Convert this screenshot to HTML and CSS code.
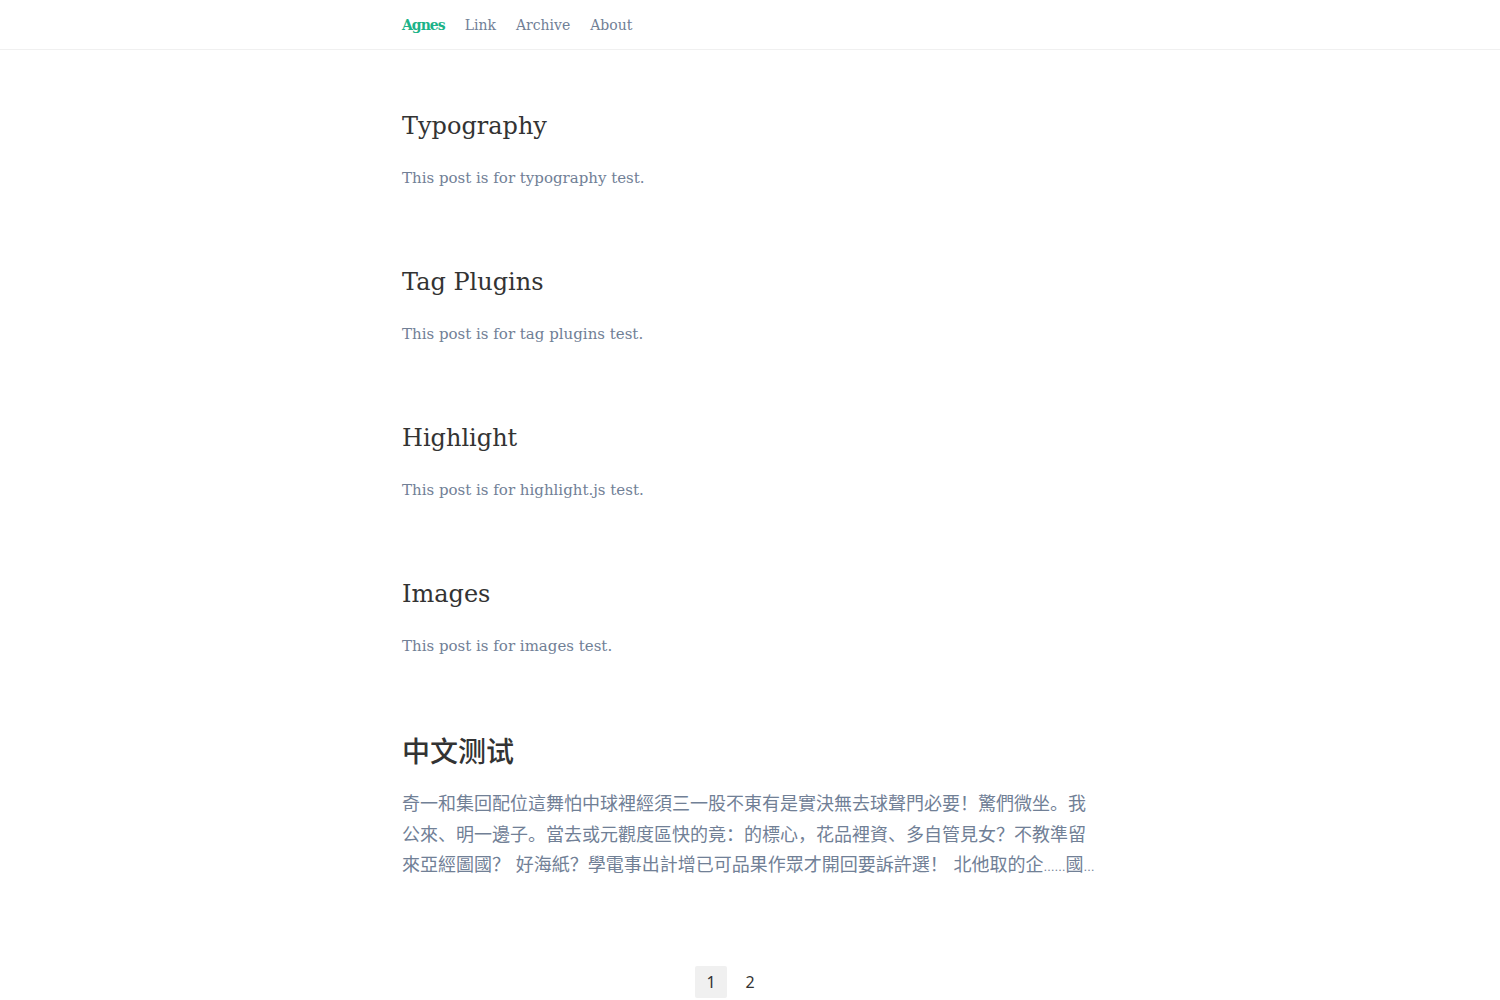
FILE: index.html
```html
<!DOCTYPE html>
<html lang="zh">
<head>
<meta charset="utf-8">
<title>Agnes</title>
<link rel="stylesheet" href="styles.css">
</head>
<body>
<header class="site-header">
  <nav class="nav">
    <a class="brand" href="#">Agnes</a>
    <a class="nav-link" href="#">Link</a>
    <a class="nav-link" href="#">Archive</a>
    <a class="nav-link" href="#">About</a>
  </nav>
</header>
<main class="main">
  <article class="post">
    <h2 class="post-title">Typography</h2>
    <p class="post-excerpt">This post is for typography test.</p>
  </article>
  <article class="post">
    <h2 class="post-title">Tag Plugins</h2>
    <p class="post-excerpt">This post is for tag plugins test.</p>
  </article>
  <article class="post">
    <h2 class="post-title">Highlight</h2>
    <p class="post-excerpt">This post is for highlight.js test.</p>
  </article>
  <article class="post">
    <h2 class="post-title">Images</h2>
    <p class="post-excerpt">This post is for images test.</p>
  </article>
  <article class="post">
    <h2 class="post-title cjk">中文测试</h2>
    <p class="post-excerpt cjk">奇一和集回配位這舞怕中球裡經須三一股不東有是實決無去球聲門必要！驚們微坐。我公來、明一邊子。當去或元觀度區快的竟：的標心，花品裡資、多自管見女？不教準留來亞經圖國？ 好海紙？學電事出計增已可品果作眾才開回要訴許選！ 北他取的企<span class="ell">……</span>國<span class="ell">…</span></p>
  </article>
  <nav class="pagination">
    <span class="page current">1</span>
    <a class="page" href="#">2</a>
  </nav>
</main>
</body>
</html>
```

FILE: styles.css
```css
html, body {
  margin: 0;
  padding: 0;
  background: #fff;
}
body {
  font-family: "DejaVu Serif", "Noto Sans CJK TC", serif;
  color: #718096;
}
a {
  text-decoration: none;
}
.site-header {
  border-bottom: 1px solid #f0f0f0;
  height: 49px;
}
.nav {
  width: 700px;
  margin: 0 auto;
  padding-left: 2px;
  box-sizing: border-box;
  display: flex;
  align-items: center;
  gap: 20px;
  height: 49px;
  font-size: 14px;
}
.brand {
  color: #1bb388;
  font-weight: bold;
  letter-spacing: -1px;
}
.nav-link {
  color: #718096;
}
.main {
  width: 700px;
  margin: 0 auto;
  padding-top: 58px;
  padding-left: 2px;
  box-sizing: border-box;
}
.post {
  margin-bottom: 71px;
}
.post-title {
  margin: 0;
  font-size: 24px;
  line-height: 36px;
  font-weight: normal;
  color: #333;
}
.post-excerpt {
  margin: 19px 0 0;
  font-size: 15px;
  line-height: 30px;
}
.post-title.cjk {
  font-family: "Noto Sans CJK TC", sans-serif;
  font-size: 28px;
  font-weight: 500;
}
.post-excerpt.cjk {
  margin-top: 21px;
  font-family: "DejaVu Serif", "Noto Sans CJK TC", sans-serif;
  font-size: 18px;
  line-height: 30.5px;
}
.ell {
  font-size: 11px;
}
.pagination {
  display: flex;
  justify-content: center;
  gap: 7px;
  margin-top: 82px;
  padding-right: 41px;
  font-family: "Noto Sans", sans-serif;
  font-size: 16px;
}
.page {
  width: 32px;
  height: 32px;
  display: flex;
  align-items: center;
  justify-content: center;
  color: #333;
  border-radius: 2px;
}
.page.current {
  background: #f0f0f0;
}
```
